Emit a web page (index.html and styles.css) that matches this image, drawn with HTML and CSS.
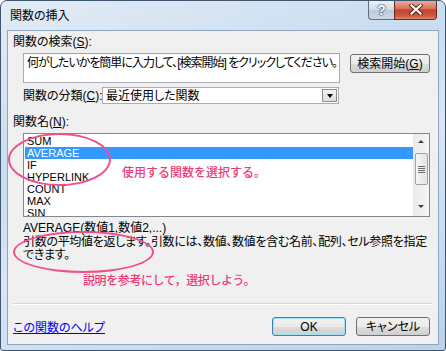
FILE: index.html
```html
<!DOCTYPE html>
<html>
<head>
  <meta charset="utf-8">
  <title>関数の挿入</title>
  <link rel="stylesheet" href="styles.css">
</head>
<body>
  <div class="dlg-window">
    <header class="dlg-titlebar">
      <span class="dlg-title">関数の挿入</span>
      <div class="dlg-caption">
        <button class="cap-help">?</button>
        <button class="cap-close">
          <svg width="14" height="11" viewBox="0 0 14 11">
            <path d="M2.5 1.5 L11.5 9.5 M11.5 1.5 L2.5 9.5" stroke="#5a1f16" stroke-width="4" stroke-linecap="square" fill="none"/>
            <path d="M2.5 1.5 L11.5 9.5 M11.5 1.5 L2.5 9.5" stroke="#ffffff" stroke-width="2.2" stroke-linecap="square" fill="none"/>
          </svg>
        </button>
      </div>
    </header>

    <main class="dlg-client">
      <div class="dlg-label">関数の検索(<u>S</u>):</div>
      <div class="search-row">
        <div class="search-box">何がしたいかを簡単に入力して、[検索開始] をクリックしてください。</div>
        <button class="dlg-btn search-btn">検索開始(<u>G</u>)</button>
      </div>
      <div class="category-row">
        <span class="category-label">関数の分類(<u>C</u>):</span>
        <div class="combo">
          <span class="combo-text">最近使用した関数</span>
          <span class="combo-arrow"></span>
        </div>
      </div>

      <div class="dlg-label name-label">関数名(<u>N</u>):</div>
      <div class="func-list">
        <ul class="func-items">
          <li>SUM</li>
          <li class="selected">AVERAGE</li>
          <li>IF</li>
          <li>HYPERLINK</li>
          <li>COUNT</li>
          <li>MAX</li>
          <li>SIN</li>
        </ul>
        <div class="list-scroll">
          <span class="arrow-up"></span>
          <span class="scroll-thumb"><i></i><i></i><i></i><i></i></span>
          <span class="arrow-down"></span>
        </div>
        <span class="note note-list">使用する関数を選択する。</span>
      </div>

      <div class="func-syntax">AVERAGE(数値1,数値2,...)</div>
      <p class="func-desc">引数の平均値を返します。引数には、数値、数値を含む名前、配列、セル参照を指定できます。</p>
      <div class="note note-desc">説明を参考にして，選択しよう。</div>

      <hr class="dlg-sep">
      <footer class="dlg-footer">
        <a class="help-link" href="#">この関数のヘルプ</a>
        <button class="dlg-btn ok-btn">OK</button>
        <button class="dlg-btn">キャンセル</button>
      </footer>
    </main>

    <div class="mark mark-list"></div>
    <div class="mark mark-desc"></div>
  </div>
</body>
</html>
```

FILE: styles.css
```css
body {
  margin: 0;
  font-family: "Liberation Sans", "Noto Sans CJK JP", sans-serif;
  font-size: 12px;
  font-feature-settings: "palt";
  color: #000;
}

.dlg-window {
  position: relative;
  width: 446px;
  height: 351px;
  box-sizing: border-box;
  border: 1px solid #3f566f;
  border-radius: 7px 7px 3px 3px;
  background: linear-gradient(160deg, #e3ecf6 0%, #c9dcf0 35%, #d8e6f4 55%, #bcd2ea 100%);
  display: flex;
  flex-direction: column;
  overflow: hidden;
}

/* title bar */
.dlg-titlebar {
  height: 29px;
  flex-shrink: 0;
  display: flex;
  align-items: flex-start;
  padding-left: 9px;
}

.dlg-title {
  line-height: 30px;
}

.dlg-caption {
  margin-left: auto;
  margin-right: 8px;
  margin-top: -1px;
  display: flex;
}

.cap-help,
.cap-close {
  height: 20px;
  padding: 0;
  border: 1px solid #5d6f86;
  border-top: none;
  display: flex;
  align-items: center;
  justify-content: center;
}

.cap-help {
  width: 26px;
  border-radius: 0 0 0 4px;
  border-right: none;
  background: linear-gradient(#eef3f9, #d3dde9 50%, #bcc9d8 52%, #cdd8e4);
  color: #fff;
  font: bold 14px "Liberation Sans", sans-serif;
  text-shadow: 0 0 1px #2f4054, 0 0 1px #2f4054, 0 0 2px #2f4054;
}

.cap-close {
  width: 43px;
  border-color: #6a2a1f;
  border-radius: 0 0 4px 0;
  background: linear-gradient(#eab3a4, #d9735c 45%, #c4432b 52%, #cf5a40 85%, #e08a70);
}

/* client area */
.dlg-client {
  flex: 1;
  min-height: 0;
  margin: 0 6px 5px 6px;
  border: 1px solid #8ea6c0;
  background: #f0f0f0;
  padding: 4px 8px 0 5px;
  display: flex;
  flex-direction: column;
}

.dlg-label {
  line-height: 14px;
  height: 14px;
  white-space: nowrap;
}

.search-row {
  display: flex;
  align-items: flex-start;
  gap: 10px;
  margin: 4px 0 0 10px;
}

.search-box {
  width: 317px;
  height: 30px;
  box-sizing: border-box;
  border: 1px solid #abadb3;
  border-top-color: #9ea1a9;
  background: #fff;
  padding: 2px 3px;
  line-height: 14px;
  letter-spacing: -1px;
  white-space: nowrap;
  overflow: hidden;
}

.dlg-btn {
  height: 19px;
  padding: 0;
  border: 1px solid #707070;
  border-radius: 3px;
  background: linear-gradient(#f2f2f2, #ebebeb 50%, #dddddd 51%, #cfcfcf);
  font: 12px "Liberation Sans", "Noto Sans CJK JP", sans-serif;
  font-feature-settings: "palt";
  color: #000;
  line-height: 16px;
  white-space: nowrap;
}

.search-btn {
  width: 80px;
  flex-shrink: 0;
  margin-top: 1px;
}

.category-row {
  display: flex;
  align-items: center;
  margin: 4px 0 0 10px;
  height: 17px;
}

.category-label {
  width: 79px;
  flex-shrink: 0;
  white-space: nowrap;
  line-height: 14px;
}

.combo {
  width: 237px;
  height: 17px;
  box-sizing: border-box;
  border: 1px solid #abadb3;
  background: #fff;
  display: flex;
  align-items: center;
  padding: 0 1px 0 3px;
}

.combo-text {
  flex: 1;
  line-height: 14px;
}

.combo-arrow {
  width: 15px;
  height: 13px;
  box-sizing: border-box;
  border: 1px solid #8c8c8c;
  background: linear-gradient(#f3f3f3, #dcdcdc);
  display: flex;
  align-items: center;
  justify-content: center;
}

.combo-arrow::after {
  content: "";
  border-left: 3px solid transparent;
  border-right: 3px solid transparent;
  border-top: 4px solid #000;
}

.name-label {
  margin-top: 11px;
}

/* function list */
.func-list {
  position: relative;
  height: 84px;
  flex-shrink: 0;
  box-sizing: border-box;
  margin: 4px 0 0 10px;
  border: 1px solid #828790;
  background: #fff;
  display: flex;
  overflow: hidden;
}

.func-items {
  flex: 1;
  list-style: none;
  margin: 0;
  padding: 1px 0 0 1px;
  font-size: 11px;
}

.func-items li {
  line-height: 12px;
  height: 12px;
  padding-left: 2px;
}

.func-items li.selected {
  background: #3399ff;
  color: #fff;
}

.list-scroll {
  width: 16px;
  background: linear-gradient(90deg, #eaeaea, #f5f5f5);
  display: flex;
  flex-direction: column;
  align-items: center;
  padding-top: 6px;
}

.arrow-up,
.arrow-down {
  border-left: 3px solid transparent;
  border-right: 3px solid transparent;
}

.arrow-up {
  border-bottom: 3px solid #3c3c3c;
}

.arrow-down {
  border-top: 3px solid #3c3c3c;
  margin-top: auto;
  margin-bottom: 8px;
}

.scroll-thumb {
  width: 13px;
  height: 32px;
  box-sizing: border-box;
  margin-top: 10px;
  border: 1px solid #a2a2a2;
  border-radius: 2px;
  background: linear-gradient(90deg, #f6f6f6, #e2e2e2);
  display: flex;
  flex-direction: column;
  align-items: center;
  justify-content: center;
  gap: 1px;
}

.scroll-thumb i {
  width: 7px;
  height: 1px;
  background: #6f6f6f;
}

/* annotations */
.note {
  color: #f03a78;
  font-size: 12px;
  font-weight: 500;
  font-feature-settings: normal;
  line-height: 14px;
  height: 14px;
  white-space: nowrap;
}

.note-list {
  position: absolute;
  left: 98px;
  top: 32px;
}

.func-syntax {
  margin: 4px 0 0 10px;
  line-height: 14px;
  height: 14px;
  white-space: nowrap;
}

.func-desc {
  margin: 1px 0 0 10px;
  width: 410px;
  height: 26px;
  line-height: 13px;
  letter-spacing: -0.3px;
}

.note-desc {
  margin-top: 12px;
  padding-left: 70px;
  letter-spacing: -0.4px;
}

.dlg-sep {
  margin: 15px -2px 0 0;
  border: 0;
  border-top: 1px solid #d7d7d7;
  border-bottom: 1px solid #ffffff;
}

.dlg-footer {
  display: flex;
  align-items: center;
  gap: 10px;
  margin-top: 12px;
}

.help-link {
  margin-right: auto;
  color: #0000ee;
}

.dlg-footer .dlg-btn {
  width: 74px;
}

.ok-btn {
  border-color: #3c7fb1;
  box-shadow: inset 0 0 0 1px #9fe2f7;
}

.mark {
  position: absolute;
  box-sizing: border-box;
  border: 2px solid #f2508c;
  border-radius: 50%;
}

.mark-list {
  left: 7px;
  top: 132px;
  width: 103px;
  height: 53px;
}

.mark-desc {
  left: 12px;
  top: 230px;
  width: 141px;
  height: 42px;
}
```
